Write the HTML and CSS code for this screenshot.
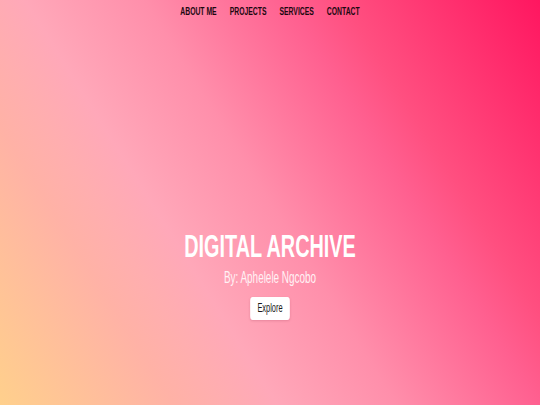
FILE: index.html
```html
<!DOCTYPE html>
<html lang="en">
<head>
<meta charset="utf-8">
<title>Digital Archive</title>
<link rel="stylesheet" href="styles.css">
</head>
<body>
<div class="frame">
  <nav class="nav">
    <a class="nav-link" href="#about">ABOUT ME</a>
    <a class="nav-link" href="#projects">PROJECTS</a>
    <a class="nav-link" href="#services">SERVICES</a>
    <a class="nav-link" href="#contact">CONTACT</a>
  </nav>
  <section class="hero">
    <h1 class="hero-title">DIGITAL ARCHIVE</h1>
    <p class="hero-sub">By: Aphelele Ngcobo</p>
    <button class="hero-btn" type="button">Explore</button>
  </section>
</div>
</body>
</html>
```
FILE: styles.css
```css
html, body {
  margin: 0;
  padding: 0;
  height: 100%;
}
body {
  overflow: hidden;
  font-family: "Liberation Sans", Arial, sans-serif;
  background: linear-gradient(58deg,
    #ffd08c 0%,
    #ffb2a6 22%,
    #ffaeaf 28%,
    #ffa8b9 35%,
    #ff8fab 50%,
    #ff6090 68%,
    #ff4f80 75%,
    #ff1660 100%);
}
.frame {
  transform: scaleX(0.62);
  transform-origin: 50% 0;
}
.nav {
  display: flex;
  justify-content: center;
  gap: 21px;
  padding-top: 5px;
}
.nav-link {
  font-size: 11px;
  font-weight: 700;
  color: #1c0810;
  text-decoration: none;
  line-height: 13px;
}
.hero {
  margin-top: 210px;
  display: flex;
  flex-direction: column;
  align-items: center;
  text-align: center;
}
.hero-title {
  margin: 0;
  font-size: 32px;
  font-weight: 700;
  line-height: 36px;
  color: #ffffff;
}
.hero-sub {
  margin: 5px 0 0;
  font-size: 16px;
  line-height: 18px;
  color: #fff2f5;
}
.hero-btn {
  margin-top: 10px;
  font-family: "Liberation Sans", Arial, sans-serif;
  font-size: 12px;
  line-height: 14px;
  padding: 4px 12px 5px;
  border: none;
  border-radius: 4px;
  background: #ffffff;
  color: #1a1a1a;
  box-shadow: 0 1px 3px rgba(120, 20, 50, 0.18);
}
```
